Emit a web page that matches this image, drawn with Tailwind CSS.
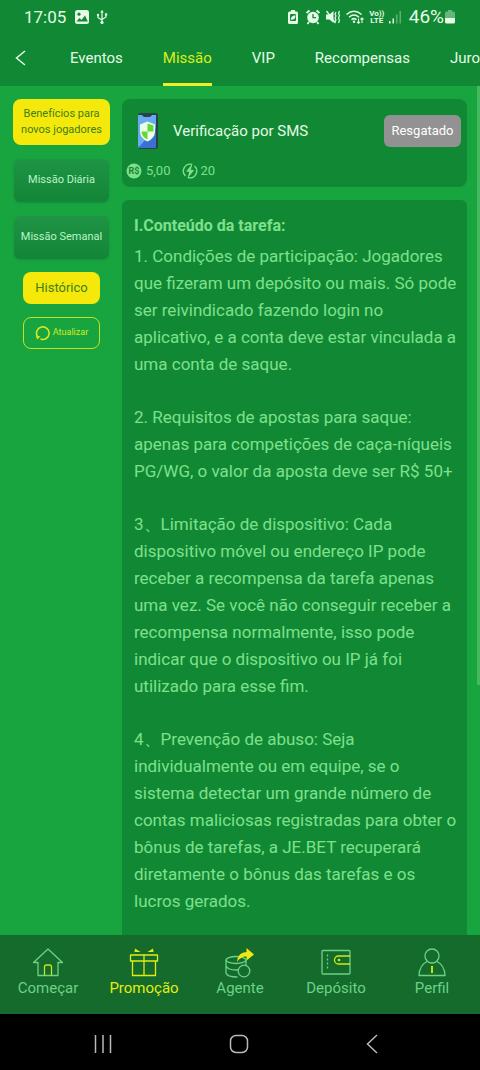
<!DOCTYPE html>
<html lang="pt-BR">
<head>
<meta charset="utf-8">
<meta name="viewport" content="width=device-width, initial-scale=1">
<title>Missão</title>
<script src="https://cdn.jsdelivr.net/npm/@tailwindcss/browser@4"></script>
</head>
<body class="flex h-screen flex-col overflow-hidden bg-[#18a540] font-['Roboto',sans-serif] text-[#e4fbe6]">
<header class="shrink-0 bg-[#118934]">
  <div class="flex h-8 items-center pt-0.5 pr-6 pl-6">
    <span class="text-[17px] leading-6">17:05</span>
    <svg class="ml-2 size-4" viewBox="0 0 16 16"><rect x="1" y="1" width="14" height="14" rx="2.5" fill="currentColor"/><circle cx="5" cy="5.2" r="1.6" fill="#118934"/><path d="M2.500 12.500 5.500 9l2 2 3.500-4.500 2.800 6z" fill="#118934"/></svg>
    <svg class="ml-1 h-4 w-4" viewBox="0 0 16 16" fill="none" stroke="currentColor" stroke-width="1.2"><path d="M8 3v10M4 6.500v2l4 2.800M12 5.500v2.500l-4 2.500"/><path d="M6.300 3.500 8 .8l1.700 2.700z" fill="currentColor" stroke="none"/><circle cx="8" cy="13.500" r="1.600" fill="currentColor" stroke="none"/><circle cx="4" cy="6" r="1.200" fill="currentColor" stroke="none"/><path d="M10.900 4.300h2.300v2.300h-2.300z" fill="currentColor" stroke="none"/></svg>
    <div class="ml-auto flex items-center gap-1">
      <svg class="h-4 w-3" viewBox="0 0 12 16"><path d="M4 1h4v1.500h1.500Q11 2.500 11 4v9.500q0 1.500-1.500 1.500h-7Q1 15 1 13.500V4q0-1.500 1.500-1.500H4z" fill="currentColor"/><rect x="3" y="5" width="6" height="7" rx="1" fill="#118934"/><path d="M3.800 10.800Q3.500 7 8.500 6.300q0 5-4.700 4.500z" fill="currentColor"/></svg>
      <svg class="ml-0.5 size-4" viewBox="0 0 16 16"><circle cx="8" cy="8.500" r="5.800" fill="currentColor"/><path d="m1.500 4 3-2.500M14.500 4l-3-2.500M4 13l-1.500 2M12 13l1.500 2" stroke="currentColor" stroke-width="1.800"/><path d="M8 5v3.700h3" fill="none" stroke="#118934" stroke-width="1.300"/></svg>
      <svg class="size-4" viewBox="0 0 16 16"><path d="M1 5.500h3.500L8.500 2v12l-4-3.500H1z" fill="currentColor"/><path d="m1.500 2 9 12" fill="none" stroke="currentColor" stroke-width="1.300"/><path d="M11 3l-1 2 1 2-1 2 1 2-1 2M14.500 2l-1 2.500 1 2-1 2.500 1 2.500-1 2.500" fill="none" stroke="currentColor" stroke-width="1.200"/></svg>
      <svg class="h-4 w-5" viewBox="0 0 20 16" fill="none" stroke="currentColor" stroke-width="1.500"><path d="M1.500 5.500q7.500-6.500 15 0M4 8.200q5-4.500 10 0M6.500 10.700q2.500-2.200 5 0"/><circle cx="9" cy="12.700" r="1.200" fill="currentColor" stroke="none"/><path d="M13.500 9.500v5M12 12.800l1.500 1.500 1.500-1.500M17 14V9M15.500 10.500 17 9l1.500 1.500" stroke-width="1.100"/></svg>
      <span class="flex w-4 flex-col items-center text-[8px] leading-[7px] font-bold"><span>Vo))</span><span>LTE</span></span>
      <svg class="h-4 w-3" viewBox="0 0 12 16" fill="currentColor"><path d="M0 12h1.500v2.500H0zM3.500 9.500H5v5H3.500z"/><path d="M7 5.500h1.500v9H7zM10.500 2H12v12.500h-1.500z" opacity=".35"/></svg>
      <span class="ml-1 flex items-center text-[19px] leading-6">46%<svg class="h-4 w-3" viewBox="0 0 12 16" fill="currentColor"><path d="M4 1h4v1.500h1.500q1.500 0 1.500 1.500v5H1V4q0-1.500 1.500-1.500H4z" opacity=".4"/><path d="M1 9h10v4q0 1.500-1.500 1.500h-7Q1 14.500 1 13z"/></svg></span>
    </div>
  </div>
  <nav class="flex h-[54px] overflow-hidden pt-3 pl-[14px] text-[15px] leading-6 whitespace-nowrap" aria-label="Seções">
    <button class="mr-11 flex h-7 w-3 shrink-0 items-center justify-center" aria-label="Voltar"><svg class="h-4 w-3 shrink-0" viewBox="0 0 12 16" fill="none" stroke="currentColor" stroke-width="1.500"><path d="M11 1 2.500 8l8.500 7"/></svg></button>
    <div class="flex gap-10">
      <a href="#" class="pt-0.5">Eventos</a>
      <a href="#" class="border-b-3 border-[#f0ef24] pt-0.5 text-[#dcee1c]" aria-current="page">Missão</a>
      <a href="#" class="pt-0.5">VIP</a>
      <a href="#" class="pt-0.5">Recompensas</a>
      <a href="#" class="pt-0.5">Juro</a>
    </div>
  </nav>
</header>
<main class="relative flex min-h-0 flex-1 gap-3 overflow-hidden pt-[13px] pr-[13px] pl-[13px]">
  <aside class="flex w-[97px] shrink-0 flex-col items-center text-[11px]">
    <button class="h-[46px] w-full rounded-lg bg-[#f5e90b] leading-4 text-[#3c7f16]">Benefícios para<br>novos jogadores</button>
    <button class="mt-[14px] h-[43px] w-[95px] rounded-md bg-linear-to-b from-[#1f9445] to-[#138536] text-[#b9f5c8] shadow">Missão Diária</button>
    <button class="mt-[14px] h-[43px] w-[95px] rounded-md bg-linear-to-b from-[#1f9445] to-[#138536] text-[#b9f5c8] shadow">Missão Semanal</button>
    <button class="mt-[13px] h-8 w-[77px] rounded-lg bg-[#f5e90b] text-[13px] text-[#3c7f16]">Histórico</button>
    <button class="mt-[13px] flex h-8 w-[77px] items-center justify-center gap-0.5 rounded-lg border border-[#bfe32a] text-[9px] text-[#d5ea20]"><svg class="size-4" viewBox="0 0 16 16" fill="none" stroke="currentColor" stroke-width="1.600"><path d="M5.500 14a6.300 6.300 0 1 0-3-2.500"/><path d="m1 10.500 4.500 1-3.500 3z" fill="currentColor" stroke="none"/></svg>Atualizar</button>
  </aside>
  <div class="flex min-w-0 flex-1 flex-col gap-[13px]">
    <section class="shrink-0 rounded-lg bg-[#118934] px-[6px] pb-2">
      <div class="flex h-16 items-center pl-2">
        <svg class="h-[38px] w-6" viewBox="0 0 24 38"><rect x="2" y="1" width="20" height="36" rx="2.500" fill="#28424a"/><path d="M2 3h4q1 2 3 2h4q2 0 3-2h4v31q0 2-2 2H4q-2 0-2-2z" fill="#69aaf0"/><path d="M2 36 20 16v18q0 2-2 2z" fill="#3a70d0"/><path d="m11.500 9.500 7.500 3v7q0 6.500-7.500 10Q4 26 4 19.500v-7z" fill="#eaffea"/><path d="M11.500 11.500v8H17.500v-6zM11.500 19.500h-6q0 5 6 8z" fill="#67d62f"/></svg>
        <h1 class="ml-[13px] text-[15px] leading-5">Verificação por SMS</h1>
        <button class="ml-auto h-8 w-[77px] rounded-md bg-[#929292] text-[13px] text-white">Resgatado</button>
      </div>
      <div class="flex h-4 items-center text-[13px] text-[#7ee08c]">
        <svg class="-ml-0.5 size-4" viewBox="0 0 16 16"><circle cx="8" cy="8" r="7.500" fill="currentColor"/><text x="8" y="11.200" text-anchor="middle" font-size="9" font-weight="700" fill="#118934">R$</text></svg>
        <span class="ml-1">5,00</span>
        <svg class="ml-3 size-4" viewBox="0 0 16 16" fill="none" stroke="currentColor" stroke-width="1.400"><path d="M10 1.500A6.800 6.800 0 0 0 3.500 13M6 14.500A6.800 6.800 0 0 0 12.500 3"/><path d="M10.500.5 4 8.800h3.200L5.500 15.500 12.200 7H8.800z" fill="currentColor" stroke="none"/></svg>
        <span class="ml-0.5">20</span>
      </div>
    </section>
    <section class="flex-1 rounded-t-md bg-[#118934] px-3 pt-[13px] text-[17px] leading-[27px] whitespace-nowrap text-[#7ee08c]">
      <h2 class="mb-1 text-base leading-[26px] font-bold">I.Conteúdo da tarefa:</h2>
      <p>1. Condições de participação: Jogadores<br>que fizeram um depósito ou mais. Só pode<br>ser reivindicado fazendo login no<br>aplicativo, e a conta deve estar vinculada a<br>uma conta de saque.</p>
      <p class="mt-[26px]">2. Requisitos de apostas para saque:<br>apenas para competições de caça-níqueis<br>PG/WG, o valor da aposta deve ser R$ 50+</p>
      <p class="mt-[26px]">3、Limitação de dispositivo: Cada<br>dispositivo móvel ou endereço IP pode<br>receber a recompensa da tarefa apenas<br>uma vez. Se você não conseguir receber a<br>recompensa normalmente, isso pode<br>indicar que o dispositivo ou IP já foi<br>utilizado para esse fim.</p>
      <p class="mt-[26px]">4、Prevenção de abuso: Seja<br>individualmente ou em equipe, se o<br>sistema detectar um grande número de<br>contas maliciosas registradas para obter o<br>bônus de tarefas, a JE.BET recuperará<br>diretamente o bônus das tarefas e os<br>lucros gerados.</p>
    </section>
  </div>
  <div class="absolute top-0 right-0 h-[70.5%] w-[3px] bg-[#46b862]"></div>
</main>
<nav class="grid h-[79px] shrink-0 grid-cols-5 bg-[#146b2c] pt-[11px] text-[15px] leading-5 text-[#6bd287]" aria-label="Principal">
  <a href="#" class="flex flex-col items-center"><svg class="h-8 w-8" viewBox="0 0 32 32" fill="none" stroke="currentColor" stroke-width="1.300" stroke-linejoin="round"><path d="M1.500 16.500 16 3l14.500 13.500H26V29.500H6V16.500z"/><path d="M12.500 29.500V21q0-2 2-2h3q2 0 2 2v8.500" stroke="#c5e41f"/></svg>Começar</a>
  <a href="#" class="flex flex-col items-center text-[#e3ec12]" aria-current="page"><svg class="h-8 w-8" viewBox="0 0 32 32" fill="none" stroke="currentColor" stroke-width="1.300" stroke-linejoin="round"><path d="M2.500 9h27v6h-27zM4.500 15h23v14.500h-23zM16 9v20.500"/><path d="m7 2.500 5.500 3.500H6.500zM25 2.500 19.500 6h6z" fill="currentColor" stroke="none"/></svg>Promoção</a>
  <a href="#" class="flex flex-col items-center"><svg class="h-8 w-8" viewBox="0 0 32 32" fill="none" stroke="currentColor" stroke-width="1.300"><ellipse cx="12" cy="14" rx="10" ry="3.500"/><path d="M2 14v13q1 4 11.500 4M22 14v6M2 20q2 4 10 4t10-4"/><circle cx="20" cy="25" r="5.800" fill="#146b2c"/><path d="M13 16Q14 6 22.500 6V2L30 8.500l-7.500 6v-4Q17 10 13 16z" fill="#efe812" stroke="none"/></svg>Agente</a>
  <a href="#" class="flex flex-col items-center"><svg class="h-8 w-8" viewBox="0 0 32 32" fill="none" stroke="currentColor" stroke-width="1.300"><rect x="2" y="4.500" width="28" height="23.500" rx="1"/><path d="M7.500 8.500v16" stroke-dasharray="2 2"/><path d="M30 10H18.500a4 4 0 0 0 0 8H30" stroke="#d5e81b"/><circle cx="19" cy="14" r="1.300" fill="#d5e81b" stroke="none"/></svg>Depósito</a>
  <a href="#" class="flex flex-col items-center"><svg class="h-8 w-8" viewBox="0 0 32 32" fill="none" stroke="currentColor" stroke-width="1.300" stroke-linejoin="round"><circle cx="16" cy="10" r="7"/><path d="M11 15.500Q3.500 19 3 29.500h26Q28.500 19 21 15.500"/><path d="M16 20v7" stroke="#e4e817" stroke-width="1.800"/></svg>Perfil</a>
</nav>
<div class="flex h-14 shrink-0 items-center justify-between bg-black pt-1 pr-[102px] pl-[94px] text-[#b9b9b9]">
  <button aria-label="Aplicativos recentes"><svg class="h-5 w-[18px]" viewBox="0 0 18 20" fill="none" stroke="currentColor" stroke-width="1.500"><path d="M1.500 1v18M9 1v18M16.500 1v18"/></svg></button>
  <button aria-label="Início"><svg class="size-5" viewBox="0 0 20 20" fill="none" stroke="currentColor" stroke-width="1.500"><rect x="1.500" y="1.500" width="17" height="17" rx="5.500"/></svg></button>
  <button aria-label="Voltar à tela anterior"><svg class="h-5 w-3" viewBox="0 0 12 20" fill="none" stroke="currentColor" stroke-width="1.500"><path d="M11 1 1.500 10l9.500 9"/></svg></button>
</div>
</body>
</html>
